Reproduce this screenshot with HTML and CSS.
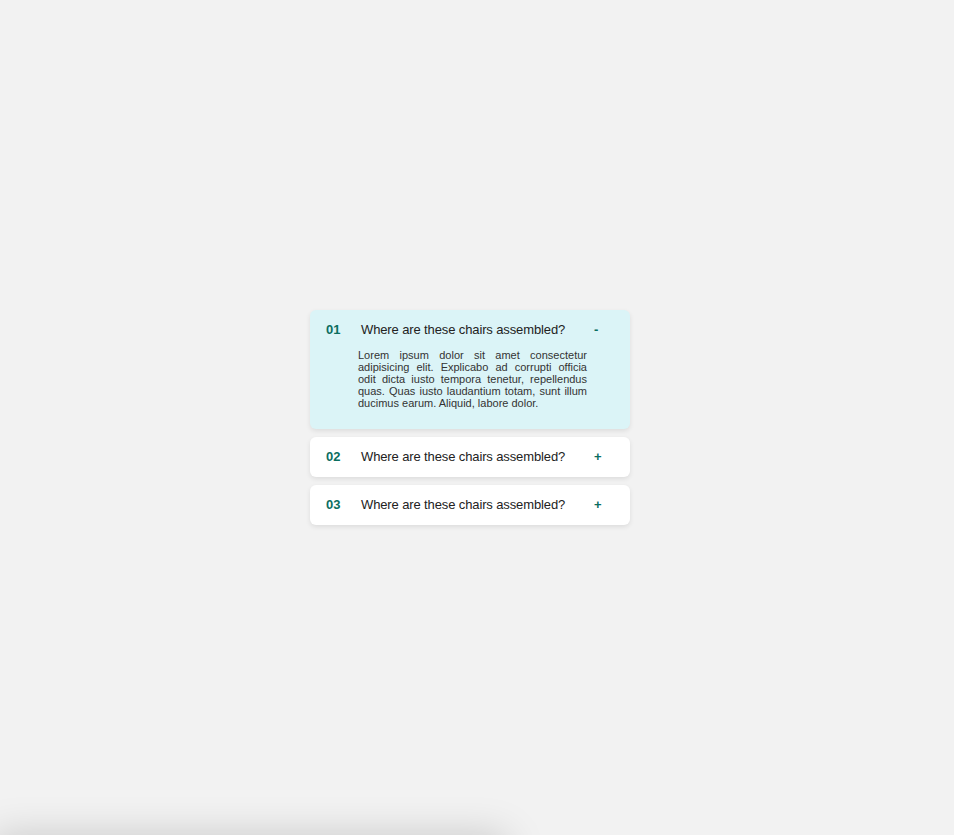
FILE: index.html
```html
<!DOCTYPE html>
<html lang="en">
<head>
<meta charset="utf-8">
<title>FAQ Accordion</title>
<link rel="stylesheet" href="styles.css">
</head>
<body>
<main class="page">
  <div class="accordion">
    <div class="item item-open">
      <span class="num">01</span>
      <span class="title">Where are these chairs assembled?</span>
      <span class="icon">-</span>
      <p class="answer">Lorem ipsum dolor sit amet consectetur adipisicing elit. Explicabo ad corrupti officia odit dicta iusto tempora tenetur, repellendus quas. Quas iusto laudantium totam, sunt illum ducimus earum. Aliquid, labore dolor.</p>
    </div>
    <div class="item">
      <span class="num">02</span>
      <span class="title">Where are these chairs assembled?</span>
      <span class="icon">+</span>
    </div>
    <div class="item">
      <span class="num">03</span>
      <span class="title">Where are these chairs assembled?</span>
      <span class="icon">+</span>
    </div>
  </div>
</main>
<div class="shadow-strip"></div>
</body>
</html>
```
FILE: styles.css
```css
html, body {
  margin: 0;
  padding: 0;
  background: #f2f2f2;
  font-family: "Liberation Sans", Arial, sans-serif;
  overflow: hidden;
}
.page {
  height: 835px;
  display: flex;
  align-items: center;
  justify-content: center;
  padding-right: 14px;
  box-sizing: border-box;
}
.accordion {
  width: 320px;
  display: flex;
  flex-direction: column;
  gap: 8px;
}
.item {
  background: #ffffff;
  border-radius: 6px;
  box-shadow: 0 2px 5px rgba(0, 0, 0, 0.09);
  display: grid;
  grid-template-columns: 32px 1fr 10px;
  column-gap: 0;
  align-items: center;
  padding: 12px 26px 12px 16px;
}
.item-open {
  background: #dbf4f7;
  padding-top: 12px;
  padding-bottom: 20px;
}
.num {
  font-size: 13px;
  font-weight: 700;
  color: #0b6e5f;
  line-height: 16px;
}
.title {
  font-size: 13px;
  color: #222;
  line-height: 16px;
  padding-left: 3px;
  letter-spacing: -0.12px;
}
.icon {
  font-size: 13px;
  color: #0b6e5f;
  line-height: 16px;
  font-weight: 600;
}
.answer {
  grid-column: 2 / 3;
  margin: 11px 7px 0 0;
  font-size: 11px;
  line-height: 12px;
  color: #333;
  text-align: justify;
}
.shadow-strip {
  position: fixed;
  left: 0;
  top: 842px;
  width: 500px;
  height: 40px;
  box-shadow: 0 0 40px 6px rgba(0, 0, 0, 0.18);
}
```
